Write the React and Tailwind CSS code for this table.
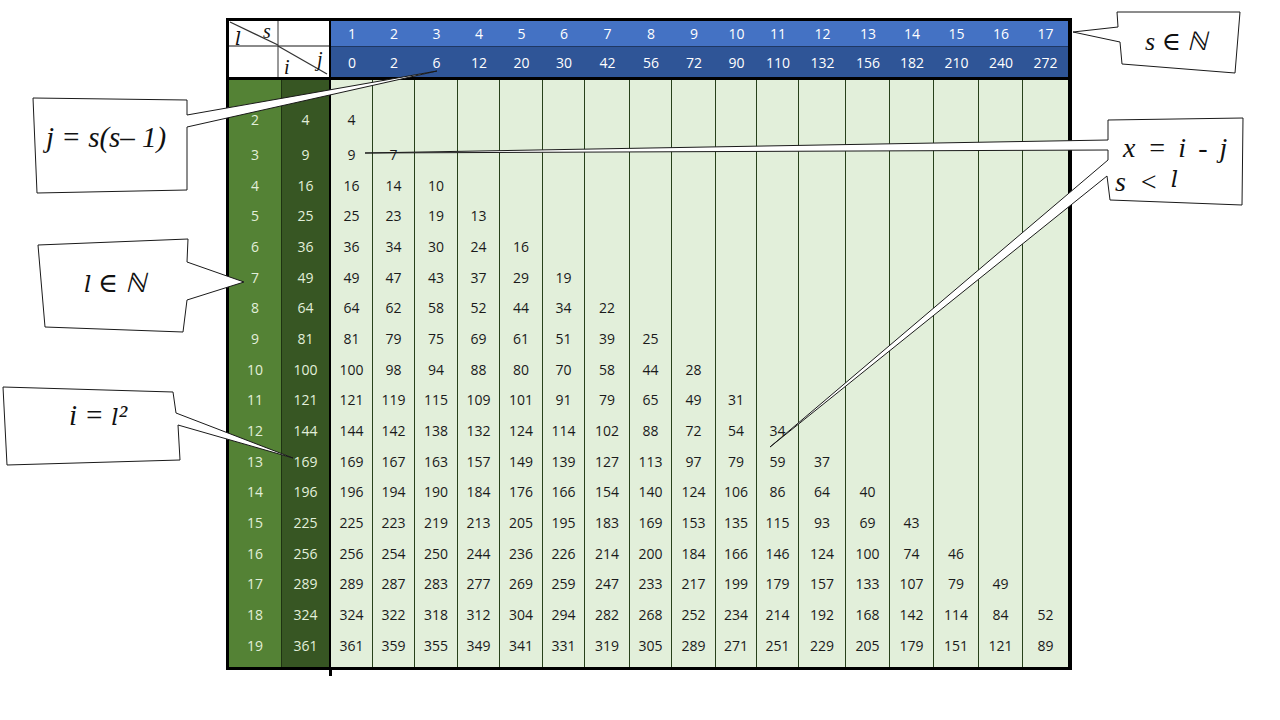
import React from 'react';

const colW = ['w-[42px]','w-[42px]','w-[43px]','w-[42px]','w-[43px]','w-[42px]','w-[45px]','w-[42px]','w-[44px]','w-[41px]','w-[42px]','w-[47px]','w-[44px]','w-[44px]','w-[45px]','w-[44px]','w-[45px]'];
const S = Array.from({ length: 17 }, (_, i) => i + 1);
const L = Array.from({ length: 18 }, (_, i) => i + 2);

const NUM = "font-['Open_Sans','Noto_Sans',sans-serif]";
const SERIF = "font-['Liberation_Serif','DejaVu_Serif',serif] italic leading-none text-[#111] whitespace-nowrap";
const ELL = "font-['DejaVu_Serif',serif] text-[23px]";

function rowH(l) {
  return l === 2 ? 'h-[40px]' : 'h-[30.7px]';
}

function BodyColumn({ w, bg, border, textCls, values }) {
  return (
    <div className={`${w} ${bg} ${border} flex flex-col`}>
      <div className="h-[19px]" />
      {L.map((l, k) => (
        <div key={l} className={`${rowH(l)} flex items-center justify-center text-[14px] ${NUM} ${textCls}`}>
          {values[k]}
        </div>
      ))}
    </div>
  );
}

function Callout({ points }) {
  return <polygon points={points} fill="#ffffff" stroke="#1a1a1a" strokeWidth="1" />;
}

export default function App() {
  return (
    <div className="relative w-[1280px] h-[720px] bg-white overflow-hidden">
      <div className="pl-[226px] pt-[18px]">
        <div className="relative w-[846px] border-[3px] border-r-4 border-black bg-black flex flex-col">
          {/* header */}
          <div className="flex h-[56px]">
            <div className="relative w-[100px] bg-white">
              <svg className="absolute inset-0" width="100" height="56">
                <line x1="0" y1="25" x2="100" y2="25" stroke="#8a8a8a" strokeWidth="2" />
                <line x1="49" y1="0" x2="49" y2="56" stroke="#333" strokeWidth="1" />
                <line x1="1" y1="1" x2="49" y2="24" stroke="#333" strokeWidth="1.3" />
                <line x1="49" y1="25" x2="98" y2="53" stroke="#333" strokeWidth="1.3" />
              </svg>
              <span className="absolute left-[6px] top-[8px] text-[19px] italic leading-none text-[#111] font-['DejaVu_Serif',serif]">l</span>
              <span className="absolute left-[34px] top-[0px] text-[20px] italic leading-none text-[#111] font-['Liberation_Serif',serif]">s</span>
              <span className="absolute left-[55px] top-[36px] text-[20px] italic leading-none text-[#111] font-['Liberation_Serif',serif]">i</span>
              <span className="absolute left-[88px] top-[28px] text-[20px] italic leading-none text-[#111] font-['Liberation_Serif',serif]">j</span>
            </div>
            <div className="w-[2px] bg-black" />
            <div className="flex-1 flex flex-col">
              <div className="h-[26px] bg-[#4472c4] border-b border-[#1f3864] flex">
                {S.map((s, k) => (
                  <div key={s} className={`${colW[k]} flex items-center justify-center text-[14px] text-white ${NUM}`}>{s}</div>
                ))}
              </div>
              <div className="flex-1 bg-[#2f5597] flex">
                {S.map((s, k) => (
                  <div key={s} className={`${colW[k]} flex items-center justify-center text-[14px] text-white ${NUM}`}>{s * (s - 1)}</div>
                ))}
              </div>
            </div>
          </div>
          <div className="h-[3px] bg-black" />
          {/* body */}
          <div className="flex h-[587px]">
            <BodyColumn w="w-[53px]" bg="bg-[#548235]" border="border-r border-[#1e3312]" textCls="text-[#e2efda]" values={L} />
            <BodyColumn w="w-[47px]" bg="bg-[#375623]" border="" textCls="text-[#e2efda]" values={L.map((l) => l * l)} />
            <div className="w-[2px] bg-black" />
            {S.map((s, k) => (
              <BodyColumn
                key={s}
                w={colW[k]}
                bg="bg-[#e2efda]"
                border={k < 16 ? 'border-r border-[#27401a]' : ''}
                textCls="text-[#1a1a1a]"
                values={L.map((l) => (s < l ? l * l - s * (s - 1) : ''))}
              />
            ))}
          </div>
          <div className="absolute left-[100px] -bottom-[9px] w-[3px] h-[6px] bg-black" />
        </div>
      </div>

      {/* callouts */}
      <svg className="absolute inset-0 pointer-events-none" width="1280" height="720">
        <Callout points="33,98 187,100 187,115 437,71 187,127 187,190 37,193" />
        <Callout points="38,245 188,239 187,262 244,282 187,300 183,332 45,327" />
        <Callout points="3,387 173,392 176,413 293,458 178,425 180,460 7,465" />
        <Callout points="1108,120 1243,118 1242,205 1110,200 1107,176 770,447 1108,160 1108,150 365,153 1108,140" />
        <Callout points="1117,12 1240,12 1235,73 1122,64 1120,42 1073,32 1118,27" />
      </svg>

      <div className={`absolute left-[46px] top-[123px] text-[29px] ${SERIF}`}>j = s(s– 1)</div>
      <div className={`absolute left-[84px] top-[270px] text-[27px] ${SERIF}`}>
        <span className={ELL}>l</span> ∈ ℕ
      </div>
      <div className={`absolute left-[69px] top-[401px] text-[29px] ${SERIF}`}>
        i = <span className={ELL}>l</span>²
      </div>
      <div className={`absolute left-[1123px] top-[134px] flex gap-[12px] text-[28px] ${SERIF}`}>
        <span>x</span><span>=</span><span>i</span><span>-</span><span>j</span>
      </div>
      <div className={`absolute left-[1115px] top-[168px] flex gap-[13px] text-[28px] ${SERIF}`}>
        <span>s</span><span>&lt;</span><span className={ELL}>l</span>
      </div>
      <div className={`absolute left-[1145px] top-[29px] text-[26px] ${SERIF}`}>s ∈ ℕ</div>
    </div>
  );
}
